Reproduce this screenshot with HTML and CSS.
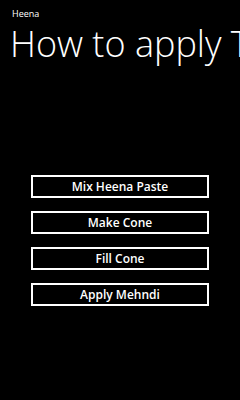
FILE: index.html
```html
<!DOCTYPE html>
<html lang="en">
<head>
    <meta charset="UTF-8">
    <meta name="viewport" content="width=device-width, initial-scale=1.0">
    <title>Heena</title>
    <link rel="stylesheet" href="styles.css">
</head>
<body>
    <div class="page">
        <div class="app-title">Heena</div>
        <h1 class="page-title">How to apply Tips</h1>

        <div class="menu">
            <button class="menu-btn">Mix Heena Paste</button>
            <button class="menu-btn">Make Cone</button>
            <button class="menu-btn">Fill Cone</button>
            <button class="menu-btn">Apply Mehndi</button>
        </div>
    </div>
</body>
</html>
```

FILE: styles.css
```css
body {
    margin: 0;
    background-color: #000;
    color: #fff;
    font-family: "Open Sans", "Noto Sans", sans-serif;
    overflow: hidden;
}

.page {
    width: 240px;
    height: 400px;
    overflow: hidden;
}

.app-title {
    font-size: 9px;
    font-weight: 400;
    padding: 9px 0 0 12px;
    line-height: 10px;
}

.page-title {
    margin: 1px 0 0;
    padding-left: 10px;
    font-size: 36px;
    font-weight: 300;
    line-height: 48px;
    white-space: nowrap;
}

.menu {
    display: flex;
    flex-direction: column;
    gap: 13px;
    margin: 107px 0 0 31px;
    width: 178px;
}

.menu-btn {
    height: 23px;
    background: #000;
    color: #fff;
    border: 2px solid #fff;
    font-family: "Open Sans", "Noto Sans", sans-serif;
    font-size: 12px;
    font-weight: 600;
    padding: 0;
}
```
